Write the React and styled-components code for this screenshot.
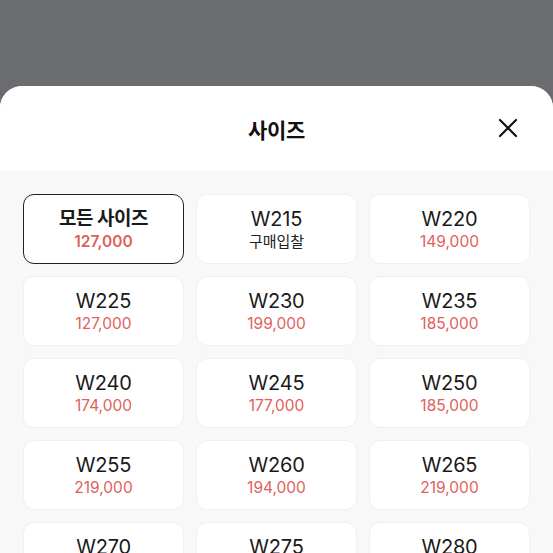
import React from 'react';
import styled, { createGlobalStyle } from 'styled-components';

const GlobalStyle = createGlobalStyle`
  html, body {
    margin: 0;
    padding: 0;
    background: #6b6c6f;
    font-family: Inter, "Noto Sans CJK KR", sans-serif;
  }
`;

const Screen = styled.div`
  width: 553px;
  height: 553px;
  overflow: hidden;
  background: #6b6c6f;
  display: flex;
  flex-direction: column;
  padding-top: 86px;
  box-sizing: border-box;
`;

const Sheet = styled.div`
  flex: 1;
  min-height: 0;
  display: flex;
  flex-direction: column;
  background: #f8f8f8;
  border-radius: 22px 22px 0 0;
  overflow: hidden;
`;

const Header = styled.div`
  flex-shrink: 0;
  height: 85px;
  background: #fff;
  display: flex;
  align-items: center;
  justify-content: center;
  position: relative;
`;

const Title = styled.h1`
  margin: 0;
  font-size: 21px;
  font-weight: 700;
  color: #111;
  letter-spacing: -0.3px;
`;

const CloseButton = styled.button`
  position: absolute;
  right: 35px;
  top: 32px;
  width: 20px;
  height: 20px;
  padding: 0;
  border: none;
  background: none;
  display: flex;
  align-items: center;
  justify-content: center;
`;

const Grid = styled.div`
  flex-shrink: 0;
  display: grid;
  grid-template-columns: repeat(3, 161px);
  grid-auto-rows: 70px;
  column-gap: 12px;
  row-gap: 12px;
  padding: 23px 24px 0 23px;
`;

const Card = styled.div`
  box-sizing: border-box;
  background: #fff;
  border-radius: 11px;
  border: ${(props) => (props.selected ? '1.5px solid #222' : '1px solid #f0f0f0')};
  display: flex;
  flex-direction: column;
  align-items: center;
  justify-content: center;
  gap: 1px;
`;

const Size = styled.div`
  font-size: ${(props) => (props.selected ? '19px' : '20px')};
  font-weight: ${(props) => (props.selected ? 700 : 400)};
  color: #1a1a1a;
  line-height: 24px;
  letter-spacing: ${(props) => (props.selected ? '-0.5px' : '-0.2px')};
`;

const Price = styled.div`
  font-size: ${(props) => (props.muted ? '15px' : '15.5px')};
  font-weight: ${(props) => (props.selected ? 600 : 400)};
  color: ${(props) => (props.muted ? '#222' : '#df5f5b')};
  line-height: 20px;
`;

const sizes = [
  { label: '모든 사이즈', price: '127,000', selected: true },
  { label: 'W215', price: '구매입찰', muted: true },
  { label: 'W220', price: '149,000' },
  { label: 'W225', price: '127,000' },
  { label: 'W230', price: '199,000' },
  { label: 'W235', price: '185,000' },
  { label: 'W240', price: '174,000' },
  { label: 'W245', price: '177,000' },
  { label: 'W250', price: '185,000' },
  { label: 'W255', price: '219,000' },
  { label: 'W260', price: '194,000' },
  { label: 'W265', price: '219,000' },
  { label: 'W270', price: '199,000' },
  { label: 'W275', price: '209,000' },
  { label: 'W280', price: '229,000' },
];

export default function App() {
  return (
    <>
      <GlobalStyle />
      <Screen>
        <Sheet>
          <Header>
            <Title>사이즈</Title>
            <CloseButton aria-label="닫기">
              <svg width="20" height="20" viewBox="0 0 20 20">
                <path d="M2 2 L18 18 M18 2 L2 18" stroke="#111" strokeWidth="2.2" strokeLinecap="round" />
              </svg>
            </CloseButton>
          </Header>
          <Grid>
            {sizes.map((s) => (
              <Card key={s.label} selected={s.selected}>
                <Size selected={s.selected}>{s.label}</Size>
                <Price selected={s.selected} muted={s.muted}>
                  {s.price}
                </Price>
              </Card>
            ))}
          </Grid>
        </Sheet>
      </Screen>
    </>
  );
}
